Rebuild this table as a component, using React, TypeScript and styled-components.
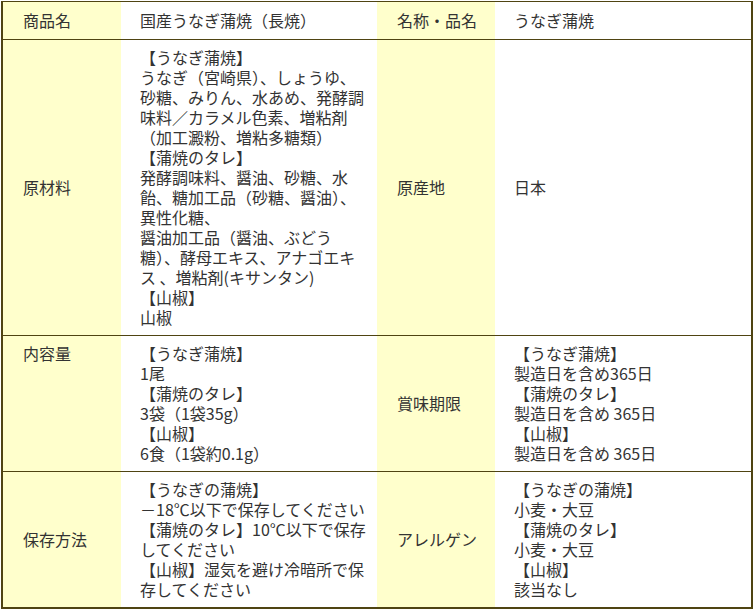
import React from "react";
import styled, { createGlobalStyle } from "styled-components";

const GlobalStyle = createGlobalStyle`
  html, body {
    margin: 0;
    padding: 0;
    background: #ffffff;
  }
  body {
    padding: 1px 0 0 1px;
    font-family: "Noto Sans CJK JP", "Noto Sans", sans-serif;
    color: #333333;
  }
`;

const Table = styled.div`
  display: flex;
  flex-direction: column;
  width: 748px;
  border-style: solid;
  border-color: #4f4412;
  border-width: 1px 2px 2px 2px;
  font-size: 16px;
  line-height: 20px;
`;

const Row = styled.div<{ $first?: boolean }>`
  display: grid;
  grid-template-columns: 118px 256px 118px 256px;
  border-top: ${(p) => (p.$first ? "none" : "1px solid #4f4412")};
`;

const LabelCell = styled.div<{ $top?: boolean; $head?: boolean }>`
  display: flex;
  align-items: ${(p) => (p.$top ? "flex-start" : "center")};
  background: #ffffcc;
  padding: ${(p) => (p.$head ? "8px 0 9px 20px" : "7px 0 8px 20px")};
  white-space: nowrap;
`;

const ValueCell = styled.div<{ $head?: boolean }>`
  display: flex;
  flex-direction: column;
  justify-content: center;
  background: #ffffff;
  padding: ${(p) => (p.$head ? "8px 0 9px 19px" : "7px 0 8px 19px")};
`;

const Line = styled.div`
  white-space: nowrap;
`;

type Item = {
  label: string;
  top?: boolean;
  lines: string[];
};

const rows: Item[][] = [
  [
    { label: "商品名", lines: ["国産うなぎ蒲焼（長焼）"] },
    { label: "名称・品名", lines: ["うなぎ蒲焼"] },
  ],
  [
    {
      label: "原材料",
      lines: [
        "【うなぎ蒲焼】",
        "うなぎ（宮崎県）、しょうゆ、",
        "砂糖、みりん、水あめ、発酵調",
        "味料／カラメル色素、増粘剤",
        "（加工澱粉、増粘多糖類）",
        "【蒲焼のタレ】",
        "発酵調味料、醤油、砂糖、水",
        "飴、糖加工品（砂糖、醤油）、",
        "異性化糖、",
        "醤油加工品（醤油、ぶどう",
        "糖）、酵母エキス、アナゴエキ",
        "ス 、増粘剤(キサンタン)",
        "【山椒】",
        "山椒",
      ],
    },
    { label: "原産地", lines: ["日本"] },
  ],
  [
    {
      label: "内容量",
      top: true,
      lines: [
        "【うなぎ蒲焼】",
        "1尾",
        "【蒲焼のタレ】",
        "3袋（1袋35g）",
        "【山椒】",
        "6食（1袋約0.1g）",
      ],
    },
    {
      label: "賞味期限",
      lines: [
        "【うなぎ蒲焼】",
        "製造日を含め365日",
        "【蒲焼のタレ】",
        "製造日を含め 365日",
        "【山椒】",
        "製造日を含め 365日",
      ],
    },
  ],
  [
    {
      label: "保存方法",
      lines: [
        "【うなぎの蒲焼】",
        "－18℃以下で保存してください",
        "【蒲焼のタレ】10℃以下で保存",
        "してください",
        "【山椒】湿気を避け冷暗所で保",
        "存してください",
      ],
    },
    {
      label: "アレルゲン",
      lines: [
        "【うなぎの蒲焼】",
        "小麦・大豆",
        "【蒲焼のタレ】",
        "小麦・大豆",
        "【山椒】",
        "該当なし",
      ],
    },
  ],
];

export default function App() {
  return (
    <>
      <GlobalStyle />
      <Table>
        {rows.map((row, ri) => (
          <Row key={ri} $first={ri === 0}>
            {row.map((item, ci) => (
              <React.Fragment key={ci}>
                <LabelCell $top={item.top} $head={ri === 0}>
                  {item.label}
                </LabelCell>
                <ValueCell $head={ri === 0}>
                  {item.lines.map((l, li) => (
                    <Line key={li}>{l}</Line>
                  ))}
                </ValueCell>
              </React.Fragment>
            ))}
          </Row>
        ))}
      </Table>
    </>
  );
}
